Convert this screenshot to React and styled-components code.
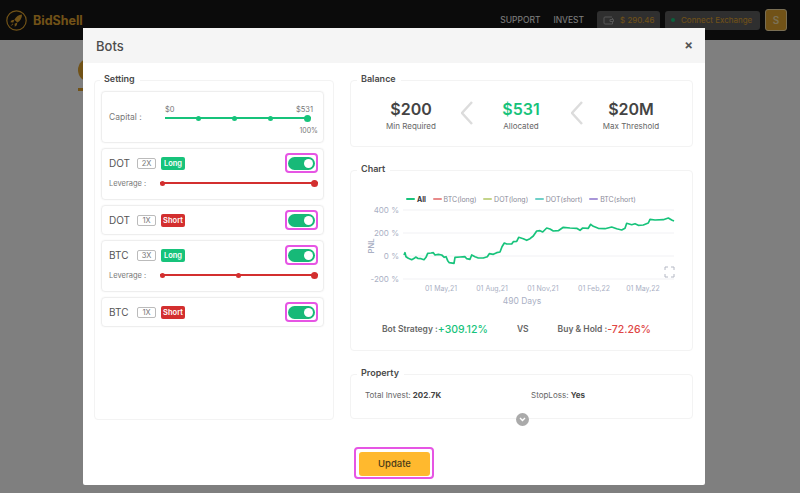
import React from 'react';
import styled, { createGlobalStyle } from 'styled-components';

const Global = createGlobalStyle`
  html, body { margin: 0; height: 100%; overflow: hidden; background: #fff; }
  body { font-family: Inter, "Noto Sans", sans-serif; color: #444; }
  * { box-sizing: border-box; }
`;

const GOLD = '#e2a52f';
const GREEN = '#17c37b';
const RED = '#d32f2f';
const PINK = '#e655e4';

const Nav = styled.header`
  height: 40px;
  background: #161616;
  display: flex;
  align-items: center;
  padding: 0 13px 0 6px;
`;
const Brand = styled.div`
  display: flex;
  align-items: center;
  gap: 6px;
  margin-right: auto;
  color: ${GOLD};
  font-weight: 700;
  font-size: 12.5px;
`;
const NavLink = styled.span`
  color: #fff;
  font-size: 8.5px;
  margin-right: 13px;
`;
const NavPill = styled.div`
  height: 19px;
  margin-right: 5px;
  padding: 0 6px;
  border-radius: 3px;
  background: #5e5e5e;
  color: ${GOLD};
  font-size: 8px;
  white-space: nowrap;
  display: flex;
  align-items: center;
  gap: 6px;
  width: ${(p) => p.$width}px;
`;
const WalletIcon = styled.svg`
  width: 11px;
  height: 10px;
  flex: none;
`;
const GreenDot = styled.span`
  width: 4px;
  height: 4px;
  flex: none;
  border-radius: 50%;
  background: ${GREEN};
`;
const Avatar = styled.div`
  width: 22px;
  height: 22px;
  border-radius: 3px;
  background: ${GOLD};
  border: 1px solid #f3dca8;
  color: #f7e2b0;
  font-size: 10px;
  font-weight: 600;
  display: flex;
  align-items: center;
  justify-content: center;
`;
const Page = styled.main`
  padding: 18px 0 0 78px;
`;
const PageCoin = styled.div`
  width: 24px;
  height: 24px;
  border-radius: 50%;
  background: ${GOLD};
`;
const PageCaption = styled.div`
  width: 20px;
  height: 3px;
  margin-top: 6px;
  background: ${GOLD};
`;

const Overlay = styled.div`
  position: fixed;
  inset: 0;
  background: rgba(0, 0, 0, 0.5);
  display: flex;
  padding: 28px 0 0 83px;
`;
const Modal = styled.div`
  width: 622px;
  height: 457px;
  background: #fff;
  border-radius: 2px;
  display: flex;
  flex-direction: column;
`;
const ModalHeader = styled.div`
  height: 35px;
  flex: none;
  background: #f5f5f5;
  display: flex;
  align-items: center;
  justify-content: space-between;
  padding: 0 12px 0 13px;
`;
const ModalTitle = styled.h2`
  margin: 0;
  font-size: 13px;
  font-weight: 500;
  color: #4d4d4d;
`;
const Close = styled.span`
  font-size: 13px;
  font-weight: 700;
  line-height: 1;
  color: #555;
`;
const ModalBody = styled.div`
  display: grid;
  grid-template-columns: 240px 343px;
  column-gap: 16px;
  align-items: start;
  padding: 9px 12px 0 11px;
`;
const Column = styled.div`
  display: flex;
  flex-direction: column;
  gap: 15px;
`;
const Group = styled.fieldset`
  margin: 0;
  padding: 0;
  min-width: 0;
  height: ${(p) => p.$height}px;
  border: 1px solid #f3f3f3;
  border-radius: 4px;
`;
const GroupTitle = styled.legend`
  margin-left: ${(p) => (p.$wide ? 6 : 5)}px;
  padding: 0 5px 2px 4px;
  font-size: 9px;
  line-height: 14px;
  font-weight: 600;
  color: #4a4a4a;
`;

const SettingList = styled.div`
  display: flex;
  flex-direction: column;
  gap: 5px;
  padding: 3px 9px 0 6px;
`;
const Card = styled.div`
  height: ${(p) => p.$height}px;
  border: 1px solid #eeeeee;
  border-radius: 4px;
  box-shadow: 0 0 2px rgba(0, 0, 0, 0.06);
  padding: 0 5px 0 7px;
`;
const CapitalCard = styled(Card)`
  display: flex;
  align-items: center;
`;
const SliderLabel = styled.span`
  width: ${(p) => p.$width}px;
  flex: none;
  font-size: 7.5px;
  color: #777;
`;
const CapitalLabel = styled(SliderLabel)`
  font-size: 8.5px;
`;
const CapitalSlider = styled.div`
  width: 153px;
  display: flex;
  flex-direction: column;
  padding-top: 6px;
`;
const Scale = styled.div`
  display: flex;
  justify-content: space-between;
  width: 148px;
  font-size: 7.5px;
  line-height: 9px;
  margin-bottom: 3px;
  color: #777;
`;
const Percent = styled.div`
  align-self: flex-end;
  font-size: 7px;
  line-height: 8px;
  margin-top: 8px;
  color: #777;
`;
const Track = styled.div`
  height: 2px;
  width: ${(p) => p.$width}px;
  flex: none;
  background: ${(p) => p.$color};
  display: flex;
  justify-content: space-between;
  align-items: center;
`;
const Thumb = styled.span`
  width: ${(p) => (p.$big ? 7 : 5)}px;
  height: ${(p) => (p.$big ? 7 : 5)}px;
  flex: none;
  border-radius: 50%;
  background: ${(p) => p.$color};
`;
const TrackStart = styled.span`
  width: 0;
  flex: none;
`;
const BotRow = styled.div`
  display: flex;
  align-items: center;
  height: 28px;
`;
const Coin = styled.span`
  width: 28px;
  font-size: 10px;
  color: #555;
`;
const Lever = styled.span`
  width: 19px;
  height: 11px;
  margin-right: 5px;
  border: 1px solid #bbb;
  border-radius: 2px;
  font-size: 7.5px;
  color: #777;
  display: flex;
  align-items: center;
  justify-content: center;
`;
const Side = styled.span`
  width: 24px;
  height: 13px;
  border-radius: 2px;
  background: ${(p) => (p.$long ? GREEN : RED)};
  color: #fff;
  font-size: 7.5px;
  font-weight: 600;
  display: flex;
  align-items: center;
  justify-content: center;
`;
const ToggleRing = styled.span`
  margin-left: auto;
  width: 33px;
  height: 20px;
  border: 2px solid ${PINK};
  border-radius: 4px;
  display: flex;
  align-items: center;
  justify-content: center;
`;
const Toggle = styled.span`
  width: 27px;
  height: 13px;
  flex: none;
  border-radius: 7px;
  background: #17b978;
  display: flex;
  align-items: center;
  justify-content: flex-end;
  padding-right: 2px;
`;
const Knob = styled.span`
  width: 9px;
  height: 9px;
  border-radius: 50%;
  background: #fff;
`;
const LeverageRow = styled.div`
  display: flex;
  align-items: center;
  height: 10px;
  margin-top: 1px;
`;

const BalanceRow = styled.div`
  height: 57px;
  display: flex;
  align-items: center;
  padding-left: 15px;
`;
const Stat = styled.div`
  width: 90px;
  text-align: center;
  margin-top: -5px;
`;
const StatValue = styled.div`
  font-size: 16px;
  line-height: 24px;
  font-weight: 600;
  color: ${(p) => p.$color || '#444'};
`;
const StatLabel = styled.div`
  font-size: 8px;
  line-height: 11px;
  color: #666;
`;
const Chevron = styled.svg`
  width: 12px;
  height: 24px;
  margin: 0 3px 8px 5px;
  flex: none;
`;

const Legend = styled.div`
  display: flex;
  height: 12px;
  margin-top: 15px;
  padding-left: 55px;
  gap: 6.5px;
`;
const LegendItem = styled.span`
  display: flex;
  align-items: center;
  gap: 2px;
  font-size: 7px;
  color: ${(p) => (p.$active ? '#333' : '#8a8a98')};
  font-weight: ${(p) => (p.$active ? 700 : 400)};
`;
const LegendMark = styled.span`
  width: 9px;
  height: 2px;
  border-radius: 1px;
  background: ${(p) => p.$color};
`;
const ChartBox = styled.svg`
  display: block;
  width: 341px;
  height: 104px;
  text {
    font-family: Inter, "Noto Sans", sans-serif;
    fill: #aab0c4;
  }
`;
const Compare = styled.div`
  display: flex;
  align-items: center;
  height: 16px;
  margin-top: 12px;
  padding-left: 31px;
  font-size: 8.5px;
  font-weight: 600;
  color: #666;
`;
const CompareValue = styled.span`
  font-size: 10.5px;
  font-weight: 500;
  color: ${(p) => p.$color};
`;
const Versus = styled.span`
  margin: 0 29px 0 29px;
`;

const PropertyRow = styled.div`
  display: grid;
  grid-template-columns: 166px 1fr;
  padding: 7px 0 0 14px;
  font-size: 8px;
  line-height: 12px;
  color: #666;
  b {
    color: #444;
    font-weight: 700;
  }
`;
const Expand = styled.span`
  width: 13px;
  height: 13px;
  margin: 12px 0 0 165px;
  border-radius: 50%;
  background: #aaaaaa;
  display: flex;
  align-items: center;
  justify-content: center;
`;
const Footer = styled.div`
  display: flex;
  padding: 27px 0 0 271px;
`;
const UpdateRing = styled.div`
  width: 80px;
  height: 32px;
  border: 2px solid ${PINK};
  border-radius: 4px;
  padding: 2px 2px 2px 3px;
`;
const UpdateButton = styled.button`
  width: 71px;
  height: 24px;
  border: 0;
  border-radius: 3px;
  background: #ffb92e;
  color: #4a3a18;
  font-family: inherit;
  font-size: 9.5px;
  font-weight: 500;
`;

const points = [
  [162, 285], [165, 278], [168, 290], [175, 295], [185, 299], [193, 295], [197, 291], [203, 295], [213, 296],
  [222, 299], [228, 292], [233, 280], [243, 279], [250, 278], [255, 285], [265, 283], [275, 285], [283, 292],
  [288, 290], [293, 302], [298, 308], [312, 310], [315, 292], [330, 291], [345, 290], [350, 296], [360, 298],
  [365, 285], [375, 290], [385, 294], [400, 294], [412, 290], [418, 281], [430, 283], [440, 278], [450, 276],
  [456, 260], [463, 249], [470, 252], [485, 252], [490, 245], [500, 244], [506, 232], [520, 236], [530, 241],
  [540, 236], [550, 228], [560, 213], [570, 212], [578, 216], [590, 204], [600, 207], [610, 213], [625, 212],
  [640, 202], [660, 204], [680, 205], [690, 211], [698, 204], [715, 205], [722, 193], [730, 199], [745, 205],
  [765, 206], [785, 201], [800, 206], [815, 210], [825, 205], [830, 190], [845, 194], [855, 191], [865, 196],
  [880, 195], [895, 189], [900, 178], [915, 180], [940, 179], [955, 174], [965, 180], [972, 183],
];
const linePoints = points.map(([x, y]) => `${(x / 3 - 1).toFixed(1)},${(y / 3 - 45).toFixed(1)}`).join(' ');

const grid = [
  { y: 5, label: '400 %' },
  { y: 28, label: '200 %' },
  { y: 51, label: '0 %' },
  { y: 74, label: '-200 %' },
];
const ticks = [
  { x: 90, label: '01 May,21' },
  { x: 141, label: '01 Aug,21' },
  { x: 192, label: '01 Nov,21' },
  { x: 243, label: '01 Feb,22' },
  { x: 292, label: '01 May,22' },
];
const series = [
  { label: 'All', color: GREEN, active: true },
  { label: 'BTC(long)', color: '#e88a8a' },
  { label: 'DOT(long)', color: '#c4d48a' },
  { label: 'DOT(short)', color: '#6fd0c8' },
  { label: 'BTC(short)', color: '#a896d8' },
];

const Bot = ({ coin, lever, long, stops }) => (
  <Card $height={stops ? 52 : 30}>
    <BotRow>
      <Coin>{coin}</Coin>
      <Lever>{lever}</Lever>
      <Side $long={long}>{long ? 'Long' : 'Short'}</Side>
      <ToggleRing>
        <Toggle>
          <Knob />
        </Toggle>
      </ToggleRing>
    </BotRow>
    {stops && (
      <LeverageRow>
        <SliderLabel $width={51}>Leverage :</SliderLabel>
        <Track $width={158} $color={RED}>
          {Array.from({ length: stops }).map((_, i) => (
            <Thumb key={i} $color={RED} $big={i === stops - 1} />
          ))}
        </Track>
      </LeverageRow>
    )}
  </Card>
);

const Chart = () => (
  <ChartBox viewBox="0 0 341 104">
    {grid.map((g) => (
      <g key={g.label}>
        <line x1="52" x2="323" y1={g.y} y2={g.y} stroke="#f1f1f4" />
        <text x="48" y={g.y + 3} fontSize="8" textAnchor="end">{g.label}</text>
      </g>
    ))}
    {ticks.map((t) => (
      <text key={t.label} x={t.x} y="86" fontSize="7" textAnchor="middle">{t.label}</text>
    ))}
    <text x="171" y="99" fontSize="8.5" textAnchor="middle">490 Days</text>
    <text transform="translate(23 41) rotate(-90)" fontSize="7.5" fontWeight="600" textAnchor="middle">PNL</text>
    <polyline points={linePoints} fill="none" stroke={GREEN} strokeWidth="1.7" strokeLinejoin="round" />
    <path d="M314 65v-3h3M320 62h3v3M323 69v3h-3M317 72h-3v-3" fill="none" stroke="#b4b8c4" strokeWidth="1" />
  </ChartBox>
);

const BalanceChevron = () => (
  <Chevron viewBox="0 0 12 24">
    <path d="M11 1L1 12l10 11" fill="none" stroke="#dcdcdc" strokeWidth="2.4" />
  </Chevron>
);

const App = () => (
  <>
    <Global />
    <Nav>
      <Brand>
        <svg width="21" height="21" viewBox="0 0 21 21" fill="none">
          <circle cx="10.5" cy="10.5" r="9.7" stroke={GOLD} strokeWidth="1.2" />
          <path d="M16 4.500c-3.400.4-6 2.200-7.600 5.200l2.900 2.900c3-1.600 4.800-4.700 4.700-8.100z" fill={GOLD} />
          <path d="M8.400 9.700l-2.700.5-1.400 2 3 .2zM11.300 12.600l-.5 2.700-2 1.400-.2-3zM6.500 13.500l-2.200 3 3-2.200z" fill={GOLD} />
        </svg>
        BidShell
      </Brand>
      <NavLink>SUPPORT</NavLink>
      <NavLink>INVEST</NavLink>
      <NavPill $width={63}>
        <WalletIcon viewBox="0 0 11 10" fill="none" stroke="#aaa" strokeWidth="1">
          <path d="M9 2H2a1 1 0 0 0-1 1v5a1 1 0 0 0 1 1h7.500V7M9.500 5V3M7 4.500h3.500v2H7z" />
        </WalletIcon>
        $ 290.46
      </NavPill>
      <NavPill $width={95}>
        <GreenDot />
        Connect Exchange
      </NavPill>
      <Avatar>S</Avatar>
    </Nav>
    <Page>
      <PageCoin />
      <PageCaption />
    </Page>
    <Overlay>
      <Modal>
        <ModalHeader>
          <ModalTitle>Bots</ModalTitle>
          <Close>×</Close>
        </ModalHeader>
        <ModalBody>
          <Group $height={348}>
            <GroupTitle>Setting</GroupTitle>
            <SettingList>
              <CapitalCard $height={52}>
                <CapitalLabel $width={56}>Capital :</CapitalLabel>
                <CapitalSlider>
                  <Scale>
                    <span>$0</span>
                    <span>$531</span>
                  </Scale>
                  <Track $width={146} $color={GREEN}>
                    <TrackStart />
                    <Thumb $color={GREEN} />
                    <Thumb $color={GREEN} />
                    <Thumb $color={GREEN} />
                    <Thumb $color={GREEN} $big />
                  </Track>
                  <Percent>100%</Percent>
                </CapitalSlider>
              </CapitalCard>
              <Bot coin="DOT" lever="2X" long stops={2} />
              <Bot coin="DOT" lever="1X" />
              <Bot coin="BTC" lever="3X" long stops={3} />
              <Bot coin="BTC" lever="1X" />
            </SettingList>
          </Group>
          <Column>
            <Group $height={75}>
              <GroupTitle $wide>Balance</GroupTitle>
              <BalanceRow>
                <Stat>
                  <StatValue>$200</StatValue>
                  <StatLabel>Min Required</StatLabel>
                </Stat>
                <BalanceChevron />
                <Stat>
                  <StatValue $color={GREEN}>$531</StatValue>
                  <StatLabel>Allocated</StatLabel>
                </Stat>
                <BalanceChevron />
                <Stat>
                  <StatValue>$20M</StatValue>
                  <StatLabel>Max Threshold</StatLabel>
                </Stat>
              </BalanceRow>
            </Group>
            <Group $height={189}>
              <GroupTitle $wide>Chart</GroupTitle>
              <Legend>
                {series.map((s) => (
                  <LegendItem key={s.label} $active={s.active}>
                    <LegendMark $color={s.color} />
                    {s.label}
                  </LegendItem>
                ))}
              </Legend>
              <Chart />
              <Compare>
                Bot Strategy :<CompareValue $color={GREEN}>+309.12%</CompareValue>
                <Versus>VS</Versus>
                Buy &amp; Hold :<CompareValue $color="#e04545">-72.26%</CompareValue>
              </Compare>
            </Group>
            <Group $height={53}>
              <GroupTitle $wide>Property</GroupTitle>
              <PropertyRow>
                <span>Total Invest: <b>202.7K</b></span>
                <span>StopLoss: <b>Yes</b></span>
              </PropertyRow>
              <Expand>
                <svg width="7" height="5" viewBox="0 0 7 5"><path d="M1 1l2.500 2.500L6 1" fill="none" stroke="#fff" strokeWidth="1.400" /></svg>
              </Expand>
            </Group>
          </Column>
        </ModalBody>
        <Footer>
          <UpdateRing>
            <UpdateButton>Update</UpdateButton>
          </UpdateRing>
        </Footer>
      </Modal>
    </Overlay>
  </>
);

export default App;
